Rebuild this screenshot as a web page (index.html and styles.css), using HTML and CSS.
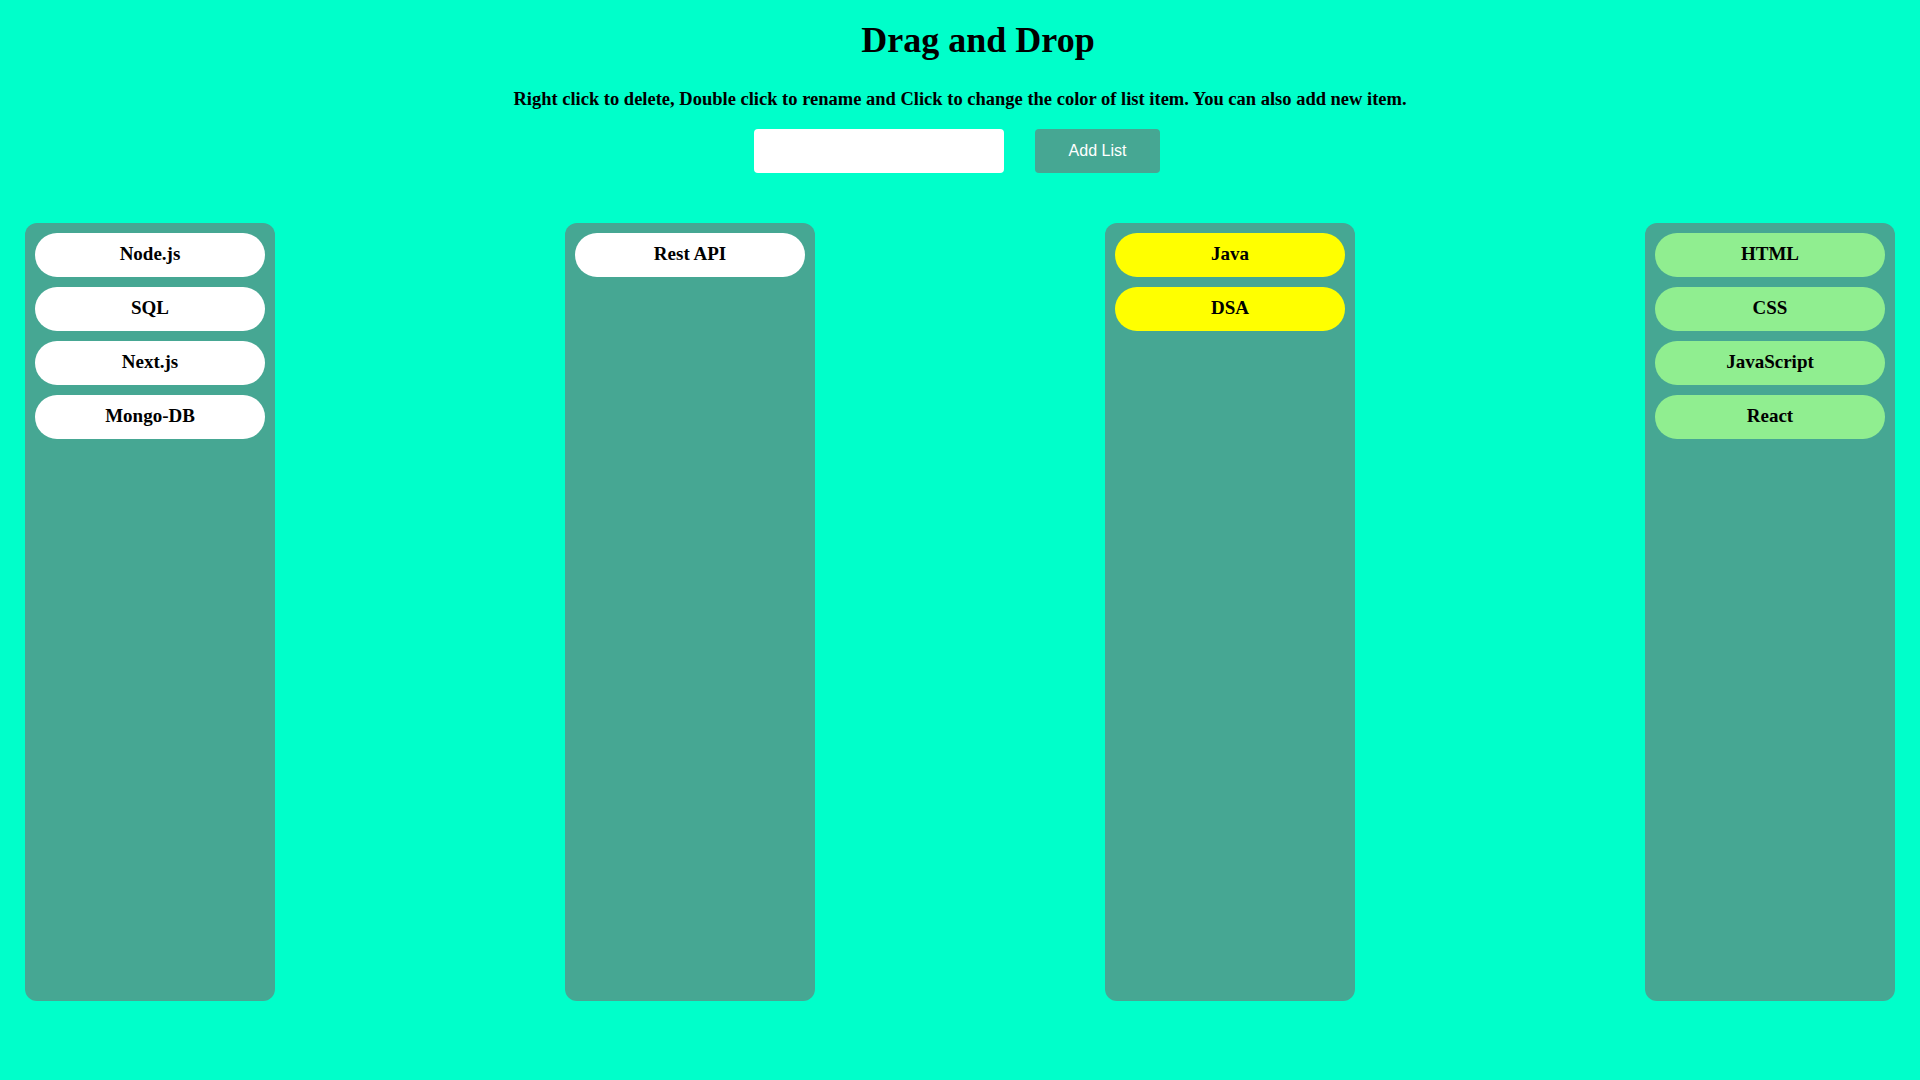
FILE: index.html
```html
<!DOCTYPE html>
<html>
<head>
<meta charset="utf-8">
<title>Drag and Drop</title>
<link rel="stylesheet" href="styles.css">
</head>
<body>
<h1 class="title">Drag and Drop</h1>
<p class="hint">Right click to delete, Double click to rename and Click to change the color of list item. You can also add new item.</p>
<div class="form">
  <input class="input" type="text">
  <button class="btn">Add List</button>
</div>
<div class="board">
  <div class="col">
    <div class="item">Node.js</div>
    <div class="item">SQL</div>
    <div class="item">Next.js</div>
    <div class="item">Mongo-DB</div>
  </div>
  <div class="col">
    <div class="item">Rest API</div>
  </div>
  <div class="col">
    <div class="item yellow">Java</div>
    <div class="item yellow">DSA</div>
  </div>
  <div class="col">
    <div class="item green">HTML</div>
    <div class="item green">CSS</div>
    <div class="item green">JavaScript</div>
    <div class="item green">React</div>
  </div>
</div>
</body>
</html>
```
FILE: styles.css
```css
html, body {
  margin: 0;
  padding: 0;
}
body {
  background: #00ffca;
  font-family: "Liberation Serif", "DejaVu Serif", serif;
  color: #000;
  width: 1920px;
  height: 1080px;
  overflow: hidden;
}
.title {
  margin: 18px 0 0;
  padding-left: 36px;
  font-size: 36px;
  line-height: 44px;
  text-align: center;
  font-weight: bold;
}
.hint {
  margin: 27px 0 0;
  font-size: 18.5px;
  line-height: 20px;
  text-align: center;
  font-weight: bold;
}
.form {
  margin-top: 20px;
  padding-right: 6px;
  display: flex;
  justify-content: center;
  gap: 31px;
}
.input {
  width: 250px;
  height: 44px;
  box-sizing: border-box;
  border: none;
  border-radius: 4px;
  background: #fff;
  padding: 0 10px;
  outline: none;
}
.btn {
  width: 125px;
  height: 44px;
  border: none;
  border-radius: 4px;
  background: #46a793;
  color: #fff;
  font-family: "Liberation Sans", Arial, sans-serif;
  font-size: 16px;
}
.board {
  margin-top: 50px;
  padding: 0 25px;
  display: flex;
  justify-content: space-between;
}
.col {
  width: 250px;
  height: 778px;
  box-sizing: border-box;
  padding: 10px;
  background: #46a793;
  border-radius: 12px;
  display: flex;
  flex-direction: column;
  gap: 10px;
}
.item {
  height: 44px;
  box-sizing: border-box;
  padding-bottom: 3px;
  border-radius: 22px;
  background: #fff;
  display: flex;
  align-items: center;
  justify-content: center;
  font-size: 19px;
  font-weight: bold;
}
.yellow { background: #ffff00; }
.green { background: #90ee90; }
```
